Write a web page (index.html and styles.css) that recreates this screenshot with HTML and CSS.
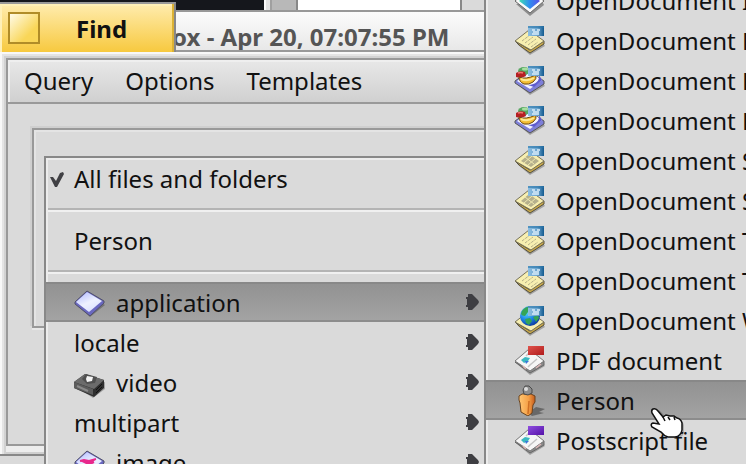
FILE: index.html
```
<!DOCTYPE html>
<html lang="en">
<head>
    <meta charset="UTF-8">
    <meta name="viewport" content="width=device-width, initial-scale=1.0">
    <title>Find</title>
    <link rel="stylesheet" href="styles.css">
</head>
<body>

    <!-- Icon set -->
    <svg class="defs" aria-hidden="true">
        <defs>
            <linearGradient id="blueGrad" x1="0" y1="0" x2="1" y2="0">
                <stop offset="0" stop-color="#8dbfe2"/>
                <stop offset="0.6" stop-color="#69a3cd"/>
                <stop offset="1" stop-color="#12598f"/>
            </linearGradient>
            <linearGradient id="lilacGrad" x1="0" y1="0" x2="0.6" y2="1">
                <stop offset="0" stop-color="#aeb8ff"/>
                <stop offset="0.6" stop-color="#eef1ff"/>
                <stop offset="1" stop-color="#dde2ff"/>
            </linearGradient>
            <linearGradient id="pictureGrad" x1="0" y1="0" x2="1" y2="0">
                <stop offset="0" stop-color="#42e0b0"/>
                <stop offset="0.5" stop-color="#2f8df0"/>
                <stop offset="1" stop-color="#5a50e8"/>
            </linearGradient>
            <linearGradient id="personGrad" x1="0" y1="0" x2="1" y2="0">
                <stop offset="0" stop-color="#ffc774"/>
                <stop offset="0.6" stop-color="#f5a046"/>
                <stop offset="1" stop-color="#c45a1c"/>
            </linearGradient>
            <linearGradient id="redGrad" x1="0" y1="0" x2="1" y2="1">
                <stop offset="0" stop-color="#e0524c"/>
                <stop offset="1" stop-color="#b01c1c"/>
            </linearGradient>
            <linearGradient id="purpleGrad" x1="0" y1="0" x2="1" y2="1">
                <stop offset="0" stop-color="#8f4ee0"/>
                <stop offset="1" stop-color="#5512a8"/>
            </linearGradient>
            <radialGradient id="globeGrad" cx="0.35" cy="0.3" r="0.8">
                <stop offset="0" stop-color="#5fe0ff"/>
                <stop offset="0.5" stop-color="#1e86e8"/>
                <stop offset="1" stop-color="#0a2c90"/>
            </radialGradient>
        </defs>

        <symbol id="odBadge" viewBox="0 0 32 32">
            <rect x="14" y="2" width="16" height="10" fill="url(#blueGrad)"/>
            <path d="M14 2h16v2h-16z" fill="#2a74a8" opacity="0.6"/>
            <path d="M18 6h2v2h4v-2h2M18 10h7" stroke="#d3e9f8" stroke-width="2" fill="none" opacity="0.8"/>
        </symbol>

        <symbol id="note" viewBox="0 0 32 32">
            <path d="M3 20l13 11 15-9-2-3-12 7z" fill="#000" opacity="0.25"/>
            <path d="M1 17l4 4 11 8 14-9v-3l-14 9z" fill="#c9a94c" stroke="#55503c" stroke-width="1"/>
            <path d="M1 17L15 6l15 11-13 9z" fill="#f7efb0" stroke="#77725a" stroke-width="1"/>
        </symbol>
        <symbol id="noteLines" viewBox="0 0 32 32">
            <path d="M8 17l8-6M11 19l8-6M14 21l8-6M17 23l7-5" stroke="#b5ae88" stroke-width="1" stroke-dasharray="3 1"/>
        </symbol>
        <symbol id="sheetLines" viewBox="0 0 32 32">
            <path d="M7 17l8-7 10 7-8 6z" fill="#b5b08c"/>
            <path d="M10 19l8-7M14 21l8-7M11 13l9 7" stroke="#eee7b0" stroke-width="1"/>
        </symbol>
        <symbol id="sheet" viewBox="0 0 32 32">
            <path d="M3 20l13 11 15-9-2-3-12 7z" fill="#000" opacity="0.25"/>
            <path d="M1 18l15 11 14-8v-4l-14 9z" fill="#8a8a8a" stroke="#666" stroke-width="1"/>
            <path d="M1 17L15 5l15 12-14 10z" fill="#f6f6f6" stroke="#777" stroke-width="1"/>
            <path d="M7 16l4-3 5 1-2 3-4 2z" fill="#3cb8c0"/>
            <path d="M11 17h4l-3 3z" fill="#3878d8"/>
            <path d="M16 21l7-6M14 23l3-3M12 12l3-3" stroke="#c4c4c4" stroke-width="1.5"/>
            <path d="M9 22l3 3M22 24l5-4" stroke="#dcb6b6" stroke-width="1.5"/>
        </symbol>

        <symbol id="icon-od-image" viewBox="0 0 32 32">
            <path d="M2 20l14 12 14-11-1-2z" fill="#000" opacity="0.35"/>
            <path d="M1 17L15 5l15 12-14 12z" fill="#fafafa" stroke="#666" stroke-width="1"/>
            <path d="M5 17L15 8l11 9-10 8z" fill="url(#pictureGrad)"/>
            <use href="#odBadge"/>
        </symbol>
        <symbol id="icon-od-text" viewBox="0 0 32 32">
            <use href="#note"/><use href="#noteLines"/><use href="#odBadge"/>
        </symbol>
        <symbol id="icon-od-sheet" viewBox="0 0 32 32">
            <use href="#note"/><use href="#sheetLines"/><use href="#odBadge"/>
        </symbol>
        <symbol id="icon-od-show" viewBox="0 0 32 32">
            <path d="M3 20l13 11 15-9-2-3-12 7z" fill="#000" opacity="0.25"/>
            <path d="M1 17L15 7l15 10v3l-14 9-15-10z" fill="#7d7fd8" stroke="#555" stroke-width="1"/>
            <path d="M3 17l13-9 12 8-12 9z" fill="#f2f3ff"/>
            <path d="M14 21q12-1 11-10l3 5-8 7z" fill="#5d5ad0"/>
            <ellipse cx="10" cy="7" rx="6" ry="4" fill="#57a861"/>
            <ellipse cx="11" cy="5" rx="3" ry="1.5" fill="#a9dfa2"/>
            <path d="M2 9q4-3 9-1l1 4q-5 3-10 1z" fill="#b51f22"/>
            <path d="M4 9q3-1 5 0" stroke="#ee7772" stroke-width="1.5" fill="none"/>
            <path d="M5 13q6 3 17-2 1 4-3 7-4 3-9 2-5-2-5-7z" fill="#f2bd35" stroke="#6f4a10" stroke-width="1"/>
            <path d="M7 15q6 3 13-1" stroke="#ffe992" stroke-width="2" fill="none"/>
            <use href="#odBadge"/>
        </symbol>
        <symbol id="icon-od-web" viewBox="0 0 32 32">
            <use href="#note" y="1"/>
            <circle cx="16" cy="12" r="10" fill="url(#globeGrad)"/>
            <path d="M8 7q4-5 8-4l-2 5-3 4q-3 0-4-2zM11 15l5-1 2 3-3 4-3-2zM19 13l5-2 1 3-3 4z" fill="#35a557"/>
            <use href="#odBadge"/>
        </symbol>
        <symbol id="icon-pdf" viewBox="0 0 32 32">
            <use href="#sheet"/>
            <rect x="14" y="2" width="16" height="9" fill="url(#redGrad)"/>
        </symbol>
        <symbol id="icon-ps" viewBox="0 0 32 32">
            <use href="#sheet"/>
            <rect x="14" y="2" width="16" height="9" fill="url(#purpleGrad)"/>
        </symbol>
        <symbol id="icon-person" viewBox="0 0 32 32">
            <path d="M14 29l8-6 9 2-6 3 5 1-12 3z" fill="#3a3a3a" opacity="0.55"/>
            <path d="M5 12l3-2h9l4 2v6l-2 3-1 8-4 3-7-4-1-9-1-3z" fill="url(#personGrad)" stroke="#6b4420" stroke-width="1"/>
            <path d="M15 17l-1 13" stroke="#cf6f24" stroke-width="1.5"/>
            <path d="M9 6l2-4h4l3 3v4l-4 2-4-1z" fill="#8d8d8d" stroke="#4a4a4a" stroke-width="1"/>
            <circle cx="12" cy="5" r="2" fill="#ddd"/>
        </symbol>
        <symbol id="icon-application" viewBox="0 0 32 32">
            <path d="M4 20l12 11 15-12-3-2-12 9z" fill="#000" opacity="0.25"/>
            <path d="M1 16L13 5l17 10v2L16 30 1 18z" fill="#6a68c0" stroke="#50506a" stroke-width="1"/>
            <path d="M2 16L13 6l15 9-13 11z" fill="url(#lilacGrad)"/>
        </symbol>
        <symbol id="icon-video" viewBox="0 0 32 32">
            <path d="M4 22l15 10 12-9v-7z" fill="#000" opacity="0.25"/>
            <path d="M0 16L11 8l19 6v8l-10 9L0 22z" fill="#2f2f2f"/>
            <path d="M0 16L11 8l19 6-10 9z" fill="#6c6c6c"/>
            <path d="M0 16l19 7v6L0 22z" fill="#5c5c5c"/>
            <path d="M3 20l11 5" stroke="#8a8a8a" stroke-width="2"/>
            <path d="M8 13l4-5 11 3-2 6-8 1z" fill="#505050"/>
            <path d="M12 13l1-3 6 1-1 4-5 1z" fill="#f4f4f4"/>
            <path d="M22 24l6-6M22 27l6-6" stroke="#111" stroke-width="1"/>
        </symbol>
        <symbol id="icon-image" viewBox="0 0 32 32">
            <path d="M1 16L13 5l17 10v2L16 30 1 18z" fill="#6a68c0" stroke="#50506a" stroke-width="1"/>
            <path d="M2 16L13 6l15 9-13 11z" fill="url(#lilacGrad)"/>
            <path d="M6 15l4-1 5 1 7-2-5 5-5 0z" fill="#e8288c"/>
            <path d="M6 15l4-1 5 1 7-2M12 20l8-4" stroke="#e8288c" stroke-width="2" fill="none"/>
        </symbol>
        <symbol id="icon-arrow" viewBox="0 0 16 20">
            <path d="M3 2h4l6 6 1 2-1 2-6 6H3v-3H1v-2h1V7H1V5h2z" fill="#3e3e42"/>
        </symbol>
        <symbol id="icon-check" viewBox="0 0 16 16">
            <path d="M1 6h3l3 4 4-8 3-1 1 2-7 13H6z" fill="#404044"/>
        </symbol>
    </svg>

    <div class="desktop">
        <div class="back-window">
            <div class="back-content">
                <div class="dark"></div>
                <div class="edge"></div>
                <div class="scroll"></div>
                <div class="page"></div>
                <div class="rest"></div>
            </div>
            <div class="back-title">ox - Apr 20, 07:07:55 PM</div>
        </div>

        <div class="window">
            <div class="tab">
                <button class="close" aria-label="Close"></button>
                <span class="tab-title">Find</span>
            </div>
            <div class="frame">
                <nav class="menubar">
                    <button>Query</button>
                    <button>Options</button>
                    <button>Templates</button>
                </nav>
                <div class="content">
                    <div class="group"></div>
                </div>
            </div>
        </div>

        <div class="menu types" role="menu">
            <button class="item" role="menuitem"><svg class="check"><use href="#icon-check"/></svg>All files and folders</button>
            <hr>
            <button class="item" role="menuitem">Person</button>
            <hr>
            <button class="item selected" role="menuitem"><svg class="icon"><use href="#icon-application"/></svg>application<svg class="arrow"><use href="#icon-arrow"/></svg></button>
            <button class="item" role="menuitem">locale<svg class="arrow"><use href="#icon-arrow"/></svg></button>
            <button class="item" role="menuitem"><svg class="icon"><use href="#icon-video"/></svg>video<svg class="arrow"><use href="#icon-arrow"/></svg></button>
            <button class="item" role="menuitem">multipart<svg class="arrow"><use href="#icon-arrow"/></svg></button>
            <button class="item" role="menuitem"><svg class="icon"><use href="#icon-image"/></svg>image<svg class="arrow"><use href="#icon-arrow"/></svg></button>
        </div>

        <div class="menu submenu" role="menu">
            <button class="item" role="menuitem"><svg class="icon"><use href="#icon-od-image"/></svg>OpenDocument Image</button>
            <button class="item" role="menuitem"><svg class="icon"><use href="#icon-od-text"/></svg>OpenDocument Master</button>
            <button class="item" role="menuitem"><svg class="icon"><use href="#icon-od-show"/></svg>OpenDocument Presentation</button>
            <button class="item" role="menuitem"><svg class="icon"><use href="#icon-od-show"/></svg>OpenDocument Presentation</button>
            <button class="item" role="menuitem"><svg class="icon"><use href="#icon-od-sheet"/></svg>OpenDocument Spreadsheet</button>
            <button class="item" role="menuitem"><svg class="icon"><use href="#icon-od-sheet"/></svg>OpenDocument Spreadsheet</button>
            <button class="item" role="menuitem"><svg class="icon"><use href="#icon-od-text"/></svg>OpenDocument Text</button>
            <button class="item" role="menuitem"><svg class="icon"><use href="#icon-od-text"/></svg>OpenDocument Text</button>
            <button class="item" role="menuitem"><svg class="icon"><use href="#icon-od-web"/></svg>OpenDocument Web</button>
            <button class="item" role="menuitem"><svg class="icon"><use href="#icon-pdf"/></svg>PDF document</button>
            <button class="item selected" role="menuitem"><svg class="icon"><use href="#icon-person"/></svg>Person</button>
            <button class="item" role="menuitem"><svg class="icon"><use href="#icon-ps"/></svg>Postscript file</button>
        </div>

        <svg class="pointer" viewBox="0 0 36 34" aria-hidden="true">
            <path d="M4 1q3-1 6 3l5 5 3-1 3 1 3 0 3 2q4 1 5 5v7q-1 6-7 6h-7q-4-1-7-5l-9-4q-2-3 1-4l5 0-6-11q-1-3 2-4z" fill="#000" opacity="0.2" transform="translate(2 2)"/>
            <path d="M3 2q3-1 5 2l5 6 3-2 4 1 4 0 3 2q4 1 5 5v7q-1 6-7 7h-7q-4-1-7-5l-9-5q-2-3 1-4l6 1-7-11q-1-3 1-4z" fill="#fff" stroke="#111" stroke-width="1.5"/>
            <path d="M13 10l2 4M18 10l2 3M24 10l1 3" stroke="#111" stroke-width="1.5"/>
        </svg>
    </div>

</body>
</html>
```
FILE: styles.css
```
* {
    box-sizing: border-box;
}
body {
    margin: 0;
    background-color: #dadada;
    color: #111;
    font-family: "Noto Sans", "Open Sans", sans-serif;
    font-size: 24px;
    line-height: 40px;
}
button {
    margin: 0;
    padding: 0;
    border: none;
    background: none;
    color: inherit;
    font: inherit;
    text-align: left;
}
.defs {
    position: absolute;
    width: 0;
    height: 0;
}
.desktop {
    position: relative;
    height: 100vh;
    overflow: hidden;
}

/* Window behind */
.back-content {
    display: flex;
    height: 10px;
}
.dark {
    width: 264px;
    background-color: #15171c;
}
.edge {
    width: 8px;
    background-color: #e2e2e2;
    border-left: 2px solid #fafafa;
    border-right: 2px solid #a0a0a0;
}
.scroll {
    width: 24px;
    background-color: #b8b8b8;
}
.page {
    width: 166px;
    background-color: #fff;
    border-left: 2px solid #888;
    border-right: 2px solid #888;
}
.rest {
    flex: 1;
    background-color: #dadada;
}
.back-title {
    height: 42px;
    padding-left: 172px;
    border-top: 2px solid #999;
    border-bottom: 2px solid #999;
    background: linear-gradient(#fcfcfc, #e8e8e8);
    color: #555;
    font-weight: bold;
    line-height: 50px;
    overflow: hidden;
}

/* Find window */
.window {
    position: absolute;
    top: 0;
    left: 0;
    width: 100%;
    height: 456px;
    display: flex;
    flex-direction: column;
    padding-top: 2px;
}
.tab {
    display: flex;
    align-items: center;
    gap: 36px;
    width: 176px;
    height: 50px;
    padding-left: 8px;
    border-top: 2px solid #999;
    border-right: 2px solid #888;
    background: linear-gradient(#ffecae, #f7c93f);
    box-shadow: inset -2px 0 #dcb234, inset 2px 2px #fff0b8;
}
.close {
    width: 32px;
    height: 32px;
    border: 2px solid #b08c28;
    background: linear-gradient(135deg, #fffbe8, #f9d658 70%);
}
.tab-title {
    padding-top: 2px;
    font-weight: bold;
}
.frame {
    flex: 1;
    display: flex;
    flex-direction: column;
    padding: 6px 6px 8px;
    background-color: #dedede;
    border-bottom: 2px solid #888;
    box-shadow: inset 2px 2px #f8f8f8, inset 4px 4px #e4e4e4, inset 6px 6px #d2d2d2, inset 0 -2px #cfcfcf, inset 0 -8px #ededed;
}
.menubar {
    display: flex;
    gap: 32px;
    height: 46px;
    padding-left: 16px;
    border: 2px solid #999;
    background: linear-gradient(#e8e8e8, #d0d0d0);
    box-shadow: inset 2px 2px #efefef;
}
.content {
    flex: 1;
    padding: 24px;
    border: 2px solid #999;
    border-top: none;
    background-color: #dadada;
}
.group {
    height: 200px;
    border: 2px solid #999;
    box-shadow: -2px -2px #cfcfcf, inset 2px 2px #e4e4e4, 0 2px #e8e8e8;
}

/* Menus */
.menu {
    position: absolute;
    display: flex;
    flex-direction: column;
    border: 2px solid #888;
    background-color: #dadada;
    box-shadow: inset 2px 2px #ececec;
}
.types {
    top: 156px;
    left: 44px;
    width: 442px;
}
.submenu {
    top: -22px;
    left: 484px;
    width: 360px;
    padding-bottom: 40px;
}
.item {
    position: relative;
    display: flex;
    flex: none;
    align-items: center;
    gap: 10px;
    height: 40px;
    padding-top: 2px;
    padding-left: 28px;
    white-space: nowrap;
}
.selected {
    border-top: 2px solid #888;
    border-bottom: 2px solid #8c8c8c;
    background: linear-gradient(#929292, #a3a3a3);
}
.icon {
    flex: none;
    width: 32px;
    height: 32px;
    margin-bottom: 2px;
}
.check {
    position: absolute;
    left: 3px;
    width: 16px;
    height: 16px;
}
.arrow {
    width: 16px;
    height: 20px;
    margin: 0 3px 2px auto;
}
hr {
    width: calc(100% - 2px);
    height: 4px;
    margin: 10px 0 8px 2px;
    border: none;
    border-top: 2px solid #b4b4b4;
    background-color: #f0f0f0;
}
.pointer {
    position: absolute;
    top: 407px;
    left: 650px;
    width: 36px;
    height: 34px;
}
```
